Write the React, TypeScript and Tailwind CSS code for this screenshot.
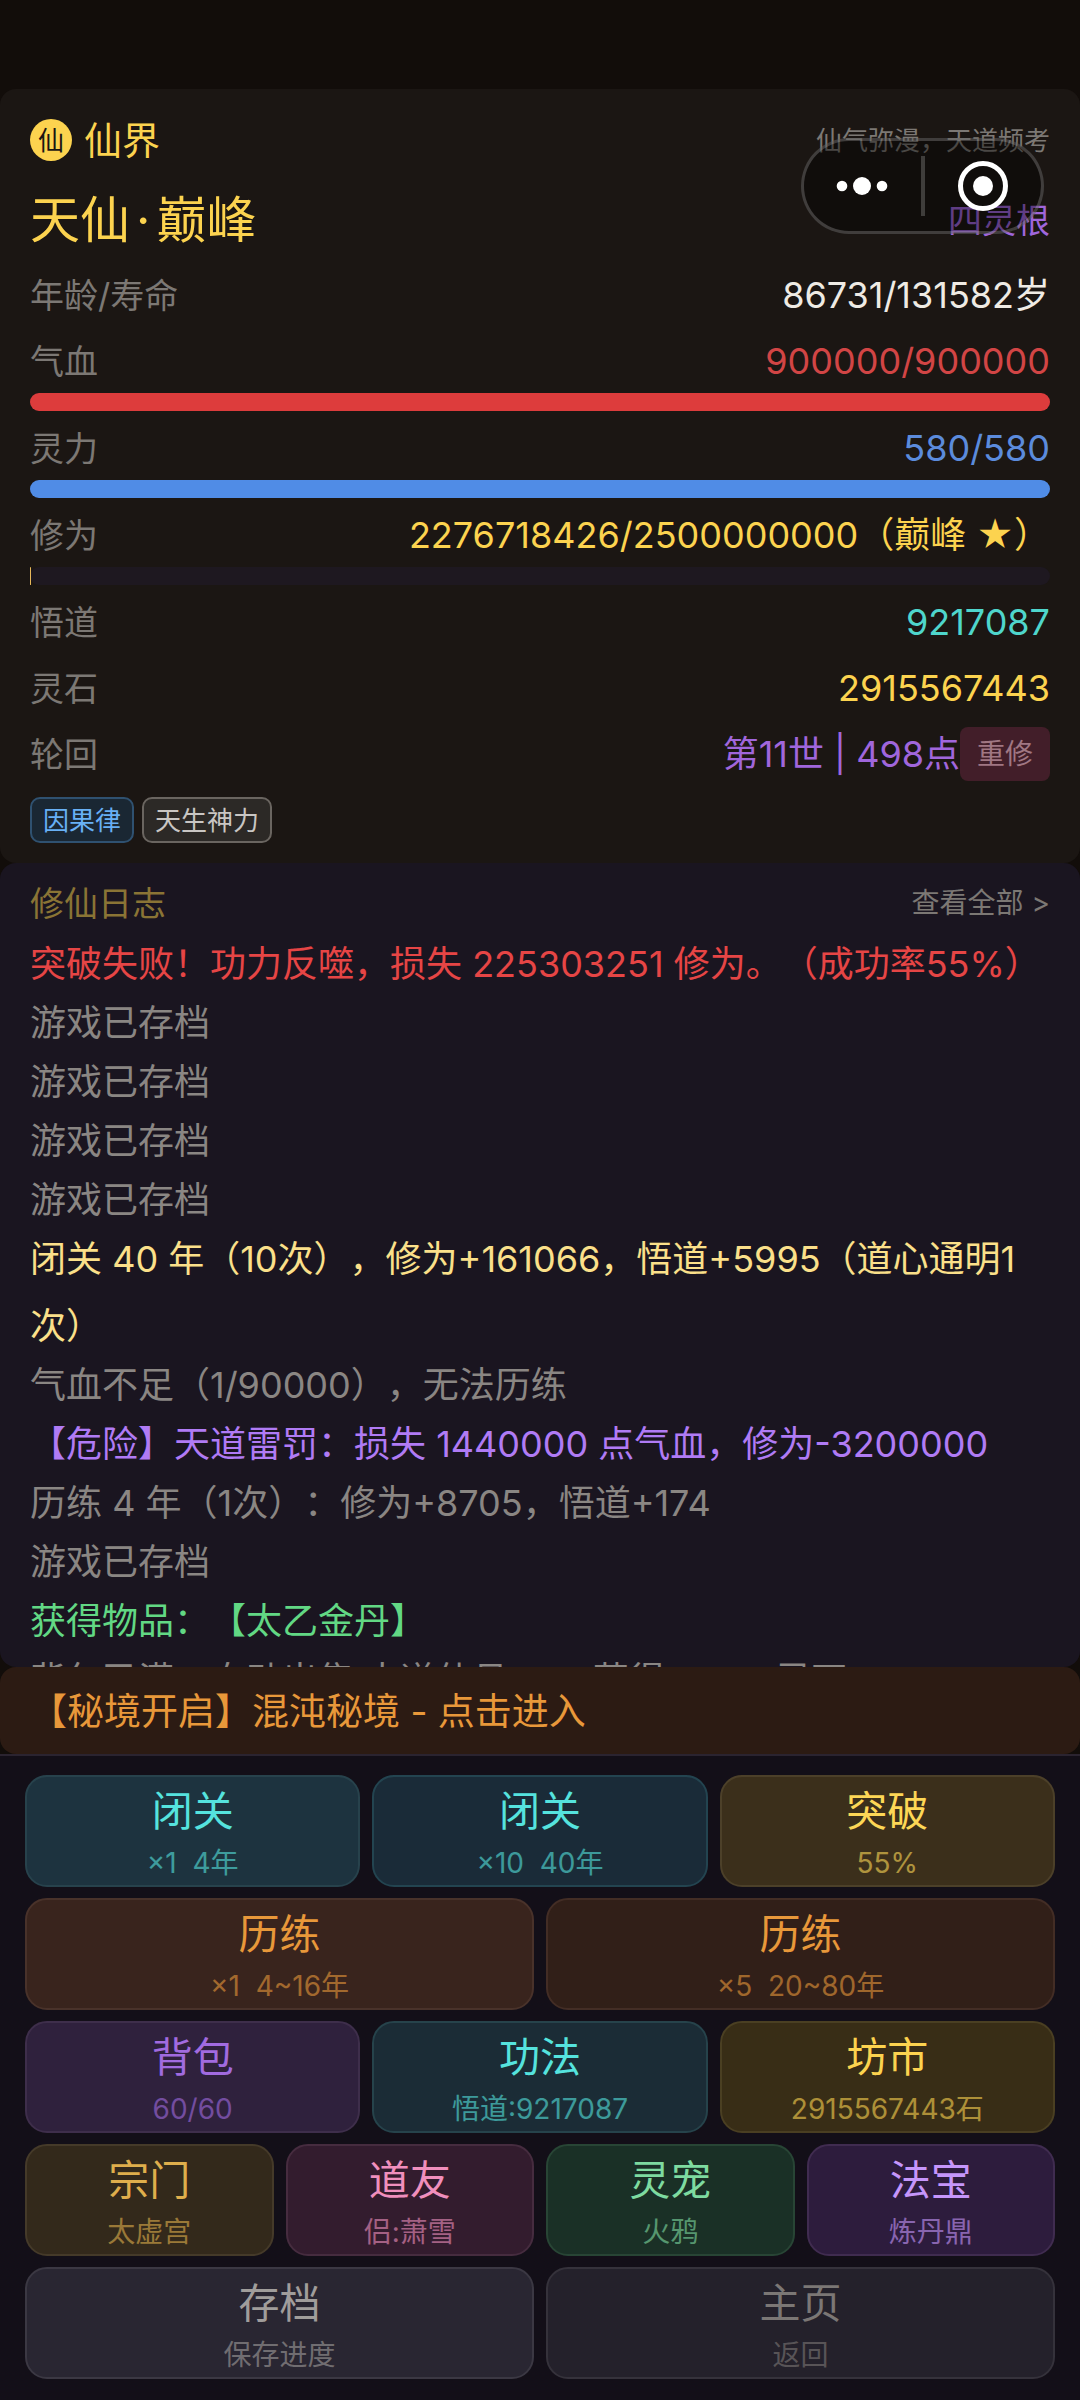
import React from "react";

interface Stat {
  label: string;
  value: string;
  color: string;
  bar?: string;
  percent?: number;
  action?: string;
}

interface Action {
  title: string;
  sub: string;
  style: string;
}

const stats: Stat[] = [
  { label: "年龄/寿命", value: "86731/131582岁", color: "text-[#efebe4]" },
  { label: "气血", value: "900000/900000", color: "text-[#d24545]", bar: "bg-[#dd3c3c]", percent: 100 },
  { label: "灵力", value: "580/580", color: "text-[#5b8bdc]", bar: "bg-[#508ce6]", percent: 100 },
  { label: "修为", value: "2276718426/2500000000（巅峰 ★）", color: "text-[#fcd34f]", bar: "bg-[#e8b85a]", percent: 0.1 },
  { label: "悟道", value: "9217087", color: "text-[#4fd6cc]" },
  { label: "灵石", value: "2915567443", color: "text-[#fcd34f]" },
  { label: "轮回", value: "第11世 | 498点", color: "text-[#a066dc]", action: "重修" },
];

const logs = [
  { text: "突破失败！功力反噬，损失 225303251 修为。（成功率55%）", color: "text-[#e64545]" },
  { text: "游戏已存档", color: "text-[#8a8683]" },
  { text: "游戏已存档", color: "text-[#8a8683]" },
  { text: "游戏已存档", color: "text-[#8a8683]" },
  { text: "游戏已存档", color: "text-[#8a8683]" },
  { text: "闭关 40 年（10次），修为+161066，悟道+5995（道心通明1次）", color: "text-[#fbe08a]" },
  { text: "气血不足（1/90000），无法历练", color: "text-[#8a8683]" },
  { text: "【危险】天道雷罚：损失 1440000 点气血，修为-3200000", color: "text-[#b07bf5]" },
  { text: "历练 4 年（1次）：修为+8705，悟道+174", color: "text-[#8a8683]" },
  { text: "游戏已存档", color: "text-[#8a8683]" },
  { text: "获得物品：【太乙金丹】", color: "text-[#62d884]" },
  { text: "背包已满，自动出售 大道仙丹 ×1，获得 5000 灵石", color: "text-[#8a8683]" },
];

const rows: { cols: string; items: Action[] }[] = [
  {
    cols: "grid-cols-3",
    items: [
      { title: "闭关", sub: "×1  4年", style: "bg-[#1d333f] border-[#27424c] text-[#55e3de]" },
      { title: "闭关", sub: "×10  40年", style: "bg-[#1a2b38] border-[#234450] text-[#55e3de]" },
      { title: "突破", sub: "55%", style: "bg-[#3b2f1b] border-[#4c4029] text-[#fdd756]" },
    ],
  },
  {
    cols: "grid-cols-2",
    items: [
      { title: "历练", sub: "×1  4~16年", style: "bg-[#39241d] border-[#49322a] text-[#e8983a]" },
      { title: "历练", sub: "×5  20~80年", style: "bg-[#311f18] border-[#432d25] text-[#e8983a]" },
    ],
  },
  {
    cols: "grid-cols-3",
    items: [
      { title: "背包", sub: "60/60", style: "bg-[#2f213d] border-[#3e2e4b] text-[#a16be0]" },
      { title: "功法", sub: "悟道:9217087", style: "bg-[#1b2c36] border-[#26434b] text-[#55e3de]" },
      { title: "坊市", sub: "2915567443石", style: "bg-[#382d16] border-[#4a3f22] text-[#fcd34f]" },
    ],
  },
  {
    cols: "grid-cols-4",
    items: [
      { title: "宗门", sub: "太虚宫", style: "bg-[#33291b] border-[#453a29] text-[#dfae4c]" },
      { title: "道友", sub: "侣:萧雪", style: "bg-[#331c2e] border-[#462c3f] text-[#f08fbd]" },
      { title: "灵宠", sub: "火鸦", style: "bg-[#1a3026] border-[#284535] text-[#7edba0]" },
      { title: "法宝", sub: "炼丹鼎", style: "bg-[#2d1c3d] border-[#402c50] text-[#c596fb]" },
    ],
  },
  {
    cols: "grid-cols-2",
    items: [
      { title: "存档", sub: "保存进度", style: "bg-[#292632] border-[#3b3843] text-[#a09d9b]" },
      { title: "主页", sub: "返回", style: "bg-[#24212b] border-[#35323b] text-[#7b7775]" },
    ],
  },
];

function Capsule() {
  return (
    <div className="absolute top-[138px] right-9 flex h-24 w-[243px] items-center rounded-full border-3 border-white/20 bg-black/40">
      <button aria-label="更多" className="flex flex-1 justify-center">
        <svg width="52" height="20" viewBox="0 0 52 20" fill="white">
          <circle cx="6" cy="10" r="5.3" />
          <circle cx="26" cy="10" r="9" />
          <circle cx="46" cy="10" r="5.3" />
        </svg>
      </button>
      <span className="h-15 w-1 bg-white/20" />
      <button aria-label="关闭" className="flex flex-1 justify-center">
        <svg width="52" height="52" viewBox="0 0 52 52">
          <circle cx="26" cy="26" r="22.5" fill="none" stroke="white" strokeWidth="5" />
          <circle cx="26" cy="26" r="10" fill="white" />
        </svg>
      </button>
    </div>
  );
}

function StatRow({ stat }: { stat: Stat }) {
  return (
    <div>
      <div className="flex h-[66px] items-center justify-between pt-0.5">
        <span className="text-[34px] text-[#7c7874]">{stat.label}</span>
        <div className="flex items-center">
          <span className={`text-[36px] ${stat.color}`}>{stat.value}</span>
          {stat.action && (
            <button className="h-[54px] rounded-lg bg-[#421e29] px-[17px] text-[28px] text-[#a07783]">
              {stat.action}
            </button>
          )}
        </div>
      </div>
      {stat.bar && (
        <div className="mb-[3px] h-[18px] rounded-full bg-[#1e1820]">
          <div className={`h-full rounded-full ${stat.bar}`} style={{ width: `${stat.percent}%` }} />
        </div>
      )}
    </div>
  );
}

function StatusCard() {
  return (
    <section className="rounded-2xl bg-[#1b1613] px-[30px] pt-3 pb-5">
      <div className="flex h-[78px] items-center justify-between">
        <div className="flex items-center gap-3 text-[38px] text-[#fcd34f]">
          <span className="flex size-[42px] items-center justify-center rounded-full bg-[#fcd34f] text-[26px] text-[#1b1613]">
            仙
          </span>
          仙界
        </div>
        <span className="text-[26px] text-[#7c7874]">仙气弥漫，天道频考</span>
      </div>
      <div className="flex h-[82px] items-center justify-between">
        <h1 className="text-[50px] text-[#fcd34f]">
          天仙<span className="px-1.5">·</span>巅峰
        </h1>
        <span className="text-[34px] text-[#a066dc]">四灵根</span>
      </div>
      {stats.map((stat) => (
        <StatRow key={stat.label} stat={stat} />
      ))}
      <div className="mt-[11px] flex gap-2 text-[26px]">
        <span className="flex h-[46px] items-center rounded-[10px] border-2 border-[#2f5170] bg-[#1a2733] px-[11px] text-[#68b0f5]">
          因果律
        </span>
        <span className="flex h-[46px] items-center rounded-[10px] border-2 border-[#6a6560] bg-[#2c2926] px-[11px] text-[#c9c6c3]">
          天生神力
        </span>
      </div>
    </section>
  );
}

export default function App() {
  return (
    <div className="relative flex h-screen flex-col bg-[#120d0a] pt-[89px] font-['Inter','Noto_Sans_CJK_SC',sans-serif] [text-spacing-trim:space-all]">
      <StatusCard />
      <Capsule />

      {/* Log */}
      <section className="flex min-h-0 flex-1 flex-col rounded-2xl bg-[#1a1520] px-[30px] pt-[14px]">
        <div className="flex h-[52px] shrink-0 items-center justify-between">
          <h2 className="text-[34px] text-[#8a7435]">修仙日志</h2>
          <a href="#logs" className="text-[28px] text-[#7c7874]">
            查看全部 &gt;
          </a>
        </div>
        <ul className="min-h-0 flex-1 overflow-y-auto pt-0.5 text-[36px] leading-[67px] [scrollbar-width:none]">
          {logs.map((log, i) => (
            <li key={i} className={`-mb-2 ${log.color}`}>
              {log.text}
            </li>
          ))}
        </ul>
      </section>

      <button className="h-[87px] shrink-0 rounded-2xl bg-[#2c1b13] px-[30px] pt-0.5 text-left text-[37px] text-[#e8983a]">
        【秘境开启】混沌秘境 - 点击进入
      </button>

      {/* Actions */}
      <nav className="flex flex-col gap-[11px] border-t-2 border-[#2b2430] bg-[#130f18] px-[25px] pt-[19px] pb-[21px]">
        {rows.map((row, i) => (
          <div key={i} className={`grid gap-3 ${row.cols}`}>
            {row.items.map((item, j) => (
              <button
                key={j}
                className={`flex h-28 flex-col items-center justify-center rounded-[22px] border-2 pt-1 ${item.style}`}
              >
                <span className="text-[41px] leading-[60px]">{item.title}</span>
                <span className="text-[28px] leading-[44px] whitespace-pre opacity-60">{item.sub}</span>
              </button>
            ))}
          </div>
        ))}
      </nav>
    </div>
  );
}
